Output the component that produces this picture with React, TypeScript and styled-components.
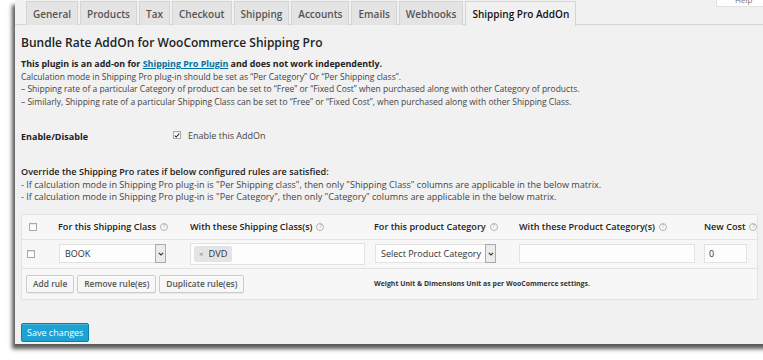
import styled, { createGlobalStyle } from 'styled-components';

const GlobalStyle = createGlobalStyle`
  html, body {
    margin: 0;
    padding: 0;
    background: #fff;
  }
  body {
    font-family: "Open Sans", "Liberation Sans", sans-serif;
    color: #444;
  }
  * {
    box-sizing: border-box;
  }
`

const Frame = styled.div`
  width: 763px;
  height: 360px;
  overflow: hidden;
  padding-left: 15px;
`

const Page = styled.div`
  position: relative;
  width: 760px;
  height: 344px;
  background: #f1f1f1;
  box-shadow: -3px 5px 4px rgba(0, 0, 0, 0.65);
`

const HelpTab = styled.div`
  position: absolute;
  top: -5px;
  left: 701px;
  width: 60px;
  height: 12px;
  background: #fff;
  border: 1px solid #e2e2e2;
  font-size: 8px;
  line-height: 8px;
  color: #72777c;
  padding: 0 0 0 18px;
`

const TabBar = styled.div`
  display: flex;
  gap: 2px;
  height: 25px;
  padding: 1px 0 0 11px;
  border-bottom: 1px solid #d4d4d4;
`

const Tab = styled.div<{ $active?: boolean }>`
  height: ${p => (p.$active ? 25 : 24)}px;
  display: flex;
  align-items: center;
  padding: 0 6px;
  font-size: 10px;
  font-weight: 600;
  color: ${p => (p.$active ? '#111' : '#555')};
  background: ${p => (p.$active ? '#f1f1f1' : '#e4e4e4')};
  border: 1px solid #d4d4d4;
  border-bottom: none;
`

const Content = styled.div`
  padding: 0 6px;
`

const Heading = styled.h2`
  margin: 10px 0 0;
  font-size: 12px;
  line-height: 16px;
  font-weight: 600;
  color: #222;
`

const Intro = styled.div`
  margin-top: 7px;
  font-size: 8.5px;
  line-height: 12.7px;
  color: #444;
`

const Strong = styled.div`
  font-size: 8.9px;
  font-weight: 700;
  color: #222;
`

const Link = styled.a`
  color: #0074a2;
  text-decoration: underline;
`

const FieldRow = styled.div`
  display: grid;
  grid-template-columns: 152px 1fr;
  align-items: center;
  height: 16px;
  margin-top: 20px;
  font-size: 9px;
`

const FieldLabel = styled.div`
  font-weight: 700;
  color: #222;
`

const CheckLabel = styled.label`
  display: flex;
  align-items: center;
  gap: 7px;
  color: #444;
  margin-top: -3px;
`

const Box = styled.span`
  display: inline-flex;
  align-items: center;
  justify-content: center;
  width: 8px;
  height: 8px;
  background: #fff;
  border: 1px solid #a9a9a9;
  box-shadow: inset 0 1px 1px rgba(0, 0, 0, 0.1);
`

const Notes = styled.div`
  margin-top: 21px;
  font-size: 9.1px;
  line-height: 12.7px;
  color: #444;
`

const NotesTitle = styled.div`
  font-weight: 600;
  color: #222;
`

const RulesTable = styled.div`
  margin-top: 10px;
  width: 737px;
  background: #f7f7f7;
  border: 1px solid #e3e3e3;
`

const Row = styled.div<{ $h: number }>`
  display: grid;
  grid-template-columns: 29px 132px 184px 145px 185px 1fr;
  align-items: center;
  height: ${p => p.$h}px;
  border-bottom: 1px solid #e3e3e3;
`

const HeadCell = styled.div`
  display: flex;
  align-items: center;
  gap: 4px;
  padding-left: 7px;
  font-size: 9.1px;
  font-weight: 600;
  color: #222;
  white-space: nowrap;
`

const Cell = styled.div<{ $pl?: number }>`
  display: flex;
  align-items: center;
  padding-left: ${p => p.$pl ?? 7}px;
`

const Tip = styled.span`
  display: inline-flex;
  align-items: center;
  justify-content: center;
  width: 8px;
  height: 8px;
  border: 1px solid #b5b5b5;
  border-radius: 50%;
  font-size: 5.5px;
  line-height: 1;
  color: #a0a0a0;
  font-weight: 400;
`

const Select = styled.div<{ $w: number }>`
  display: flex;
  align-items: center;
  justify-content: space-between;
  width: ${p => p.$w}px;
  height: 19px;
  background: #fdfdfd;
  border: 1px solid #e2e2e2;
  font-size: 9px;
  color: #333;
  padding-left: 5px;
  white-space: nowrap;
`

const Arrow = styled.span`
  display: flex;
  align-items: center;
  justify-content: center;
  flex: none;
  width: 11px;
  height: 19px;
  margin-right: -1px;
  background: #ececec;
  border: 1px solid #aaa;
`

const Multi = styled.div`
  display: flex;
  align-items: center;
  width: 175px;
  height: 22px;
  background: #fdfdfd;
  border: 1px solid #e2e2e2;
  padding-left: 3px;
`

const Chip = styled.span`
  display: inline-flex;
  align-items: center;
  gap: 5px;
  height: 16px;
  padding: 0 5px;
  background: #e4e4e4;
  border-radius: 2px;
  font-size: 9.2px;
  color: #333;
`

const ChipX = styled.span`
  font-size: 8px;
  color: #888;
`

const Input = styled.div<{ $w: number }>`
  display: flex;
  align-items: center;
  width: ${p => p.$w}px;
  height: 19px;
  background: #fdfdfd;
  border: 1px solid #e2e2e2;
  padding-left: 4px;
  font-size: 9px;
  color: #333;
`

const Footer = styled.div`
  display: flex;
  align-items: center;
  height: 30px;
  padding-left: 4px;
`

const Buttons = styled.div`
  display: flex;
  gap: 3px;
  width: 348px;
`

const Button = styled.button`
  height: 18px;
  padding: 0 6px;
  background: #f7f7f7;
  border: 1px solid #ccc;
  border-radius: 2px;
  box-shadow: 0 1px 0 #fff inset, 0 1px 0 rgba(0, 0, 0, 0.06);
  font-family: inherit;
  font-size: 8.4px;
  font-weight: 600;
  color: #555;
`

const Note = styled.div`
  font-size: 6.95px;
  font-weight: 700;
  color: #333;
`

const SaveButton = styled.button`
  margin-top: 23px;
  height: 19px;
  padding: 0 5px;
  background: #1ea1d3;
  border: 1px solid #0a7fae;
  border-radius: 2px;
  box-shadow: inset 0 1px 0 rgba(120, 200, 230, 0.5);
  font-family: inherit;
  font-size: 9px;
  color: #fff;
`

const Check = () => (
  <svg width="8" height="7" viewBox="0 0 8 7">
    <path d="M1 3.6 L3 5.6 L7 1" fill="none" stroke="#222" strokeWidth="1.4" />
  </svg>
)

const Chevron = () => (
  <svg width="6" height="4" viewBox="0 0 6 4">
    <path d="M0.8 0.8 L3 3 L5.2 0.8" fill="none" stroke="#333" strokeWidth="1.1" />
  </svg>
)

const Help = () => <Tip>?</Tip>

const tabs = ['General', 'Products', 'Tax', 'Checkout', 'Shipping', 'Accounts', 'Emails', 'Webhooks']

const App = () => {
  return (
    <Frame>
      <GlobalStyle/>
      <Page>
        <HelpTab>Help</HelpTab>
        <TabBar>
          {tabs.map(t => <Tab key={t}>{t}</Tab>)}
          <Tab $active>Shipping Pro AddOn</Tab>
        </TabBar>
        <Content>
          <Heading>Bundle Rate AddOn for WooCommerce Shipping Pro</Heading>
          <Intro>
            <Strong>This plugin is an add-on for <Link>Shipping Pro Plugin</Link> and does not work independently.</Strong>
            <div>Calculation mode in Shipping Pro plug-in should be set as “Per Category” Or “Per Shipping class”.</div>
            <div>– Shipping rate of a particular Category of product can be set to “Free” or “Fixed Cost” when purchased along with other Category of products.</div>
            <div>– Similarly, Shipping rate of a particular Shipping Class can be set to “Free” or “Fixed Cost”, when purchased along with other Shipping Class.</div>
          </Intro>
          <FieldRow>
            <FieldLabel>Enable/Disable</FieldLabel>
            <CheckLabel><Box><Check/></Box>Enable this AddOn</CheckLabel>
          </FieldRow>
          <Notes>
            <NotesTitle>Override the Shipping Pro rates if below configured rules are satisfied:</NotesTitle>
            <div>- If calculation mode in Shipping Pro plug-in is "Per Shipping class", then only "Shipping Class" columns are applicable in the below matrix.</div>
            <div>- If calculation mode in Shipping Pro plug-in is "Per Category", then only "Category" columns are applicable in the below matrix.</div>
          </Notes>
          <RulesTable>
            <Row $h={25}>
              <Cell $pl={7}><Box/></Cell>
              <HeadCell>For this Shipping Class <Help/></HeadCell>
              <HeadCell>With these Shipping Class(s) <Help/></HeadCell>
              <HeadCell>For this product Category <Help/></HeadCell>
              <HeadCell>With these Product Category(s) <Help/></HeadCell>
              <HeadCell>New Cost <Help/></HeadCell>
            </Row>
            <Row $h={29}>
              <Cell $pl={5}><Box/></Cell>
              <Cell $pl={8}>
                <Select $w={107}>BOOK<Arrow><Chevron/></Arrow></Select>
              </Cell>
              <Cell $pl={7}>
                <Multi><Chip><ChipX>×</ChipX>DVD</Chip></Multi>
              </Cell>
              <Cell $pl={8}>
                <Select $w={121}>Select Product Category<Arrow><Chevron/></Arrow></Select>
              </Cell>
              <Cell $pl={7}><Input $w={176}/></Cell>
              <Cell $pl={7}><Input $w={43}>0</Input></Cell>
            </Row>
            <Footer>
              <Buttons>
                <Button>Add rule</Button>
                <Button>Remove rule(es)</Button>
                <Button>Duplicate rule(es)</Button>
              </Buttons>
              <Note>Weight Unit &amp; Dimensions Unit as per WooCommerce settings.</Note>
            </Footer>
          </RulesTable>
          <SaveButton>Save changes</SaveButton>
        </Content>
      </Page>
    </Frame>
  )
}

export default App
